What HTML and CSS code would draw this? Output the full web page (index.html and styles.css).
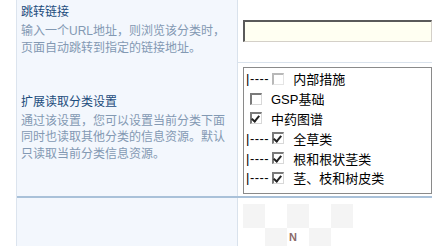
FILE: index.html
```html
<!DOCTYPE html>
<html>
<head>
  <title>分类设置</title>
  <link rel="stylesheet" href="styles.css">
</head>
<body>
  <div class="table">
    <div class="row row-first">
      <div class="label">
        <div class="title">跳转链接</div>
        <div class="desc">输入一个URL地址，则浏览该分类时，<br>页面自动跳转到指定的链接地址。</div>
      </div>
      <div class="field">
        <input type="text" class="url" name="linkUrl">
      </div>
    </div>
    <div class="row row-last">
      <div class="label">
        <div class="title">扩展读取分类设置</div>
        <div class="desc">通过该设置，您可以设置当前分类下面<br>同时也读取其他分类的信息资源。默认<br>只读取当前分类信息资源。</div>
      </div>
      <div class="field field-list">
        <div class="listbox">
          <div class="item"><span class="dash">|----</span><span class="box off"></span>内部措施</div>
          <div class="item"><span class="box"></span>GSP基础</div>
          <div class="item"><span class="box checked"></span>中药图谱</div>
          <div class="item"><span class="dash">|----</span><span class="box checked"></span>全草类</div>
          <div class="item"><span class="dash">|----</span><span class="box checked"></span>根和根状茎类</div>
          <div class="item"><span class="dash">|----</span><span class="box checked"></span>茎、枝和树皮类</div>
        </div>
      </div>
    </div>
    <div class="row">
      <div class="label"></div>
      <div class="field field-top">
        <div class="captcha">
          <span class="sq"></span><span></span><span class="sq"></span><span></span><span class="sq"></span>
          <span></span><span class="sq"></span><span></span><span class="sq"></span><span></span>
          <b class="letter">N</b>
        </div>
      </div>
    </div>
  </div>
</body>
</html>
```

FILE: styles.css
```css
body {
  margin: 0;
  background-color: #ffffff;
  font-family: "Liberation Sans", "Noto Sans CJK SC", sans-serif;
  font-size: 12px;
  overflow: hidden;
}
.table {
  margin-left: 16px;
  border-left: 1px solid #dce4ee;
}
.row {
  display: grid;
  grid-template-columns: 221px 1fr;
  border-bottom: 1px solid #d9e2ec;
}
.row-first {
  height: 62px;
}
.row-first .label {
  padding-top: 4px;
}
.row-last {
  border-bottom: 2px solid #a9c1d9;
}
.label {
  background-color: #f3f7fd;
  border-right: 1px solid #d9e2ec;
  padding: 5px 4px 8px 4px;
  display: flex;
  flex-direction: column;
  justify-content: center;
}
.title {
  color: #1c4c7c;
  line-height: 17px;
  margin-bottom: 2px;
}
.desc {
  color: #8399b3;
  line-height: 16.5px;
}
.field {
  display: flex;
  align-items: center;
  padding: 5px 0 5px 5px;
  overflow: hidden;
}
.field-list {
  padding: 4px 0 2px 5px;
}
.field-top {
  align-items: flex-start;
  height: 48px;
  padding-top: 6px;
}
.url {
  width: 260px;
  height: 22px;
  box-sizing: border-box;
  margin: 0 0 2px 0;
  background-color: #fffff2;
  border-top: 2px solid #5a5a5a;
  border-left: 2px solid #5a5a5a;
  border-right: 1px solid #d4d0c8;
  border-bottom: 1px solid #d4d0c8;
}
.listbox {
  width: 260px;
  height: 127px;
  box-sizing: border-box;
  border: 1px solid #8a8a8a;
  padding-top: 1px;
  font-size: 13px;
  color: #000000;
}
.item {
  height: 19.8px;
  display: flex;
  align-items: center;
  white-space: nowrap;
}
.dash {
  margin-left: 2px;
  margin-right: 3px;
  letter-spacing: 0.5px;
}
.box {
  width: 9px;
  height: 9px;
  border-top: 2px solid #7a7a7a;
  border-left: 2px solid #7a7a7a;
  border-right: 1px solid #d8d8d8;
  border-bottom: 1px solid #d8d8d8;
  background-color: #ffffff;
  margin: 0 9px 0 6px;
  position: relative;
}
.item .dash + .box {
  margin-left: 0;
}
.box.off {
  border-color: #b8b8b8 #e4e4e4 #e4e4e4 #b8b8b8;
}
.box.checked::after {
  content: "";
  position: absolute;
  left: 1px;
  top: 0px;
  width: 3px;
  height: 6px;
  border-right: 2px solid #222;
  border-bottom: 2px solid #222;
  transform: rotate(40deg);
}
.captcha {
  position: relative;
  display: grid;
  grid-template-columns: repeat(5, 22px);
  grid-auto-rows: 24px;
}
.captcha .sq {
  background-color: #f4f4f4;
}
.letter {
  position: absolute;
  left: 46px;
  top: 27px;
  color: #8c6a6a;
  font-weight: bold;
  font-size: 11px;
  line-height: 12px;
}
```
